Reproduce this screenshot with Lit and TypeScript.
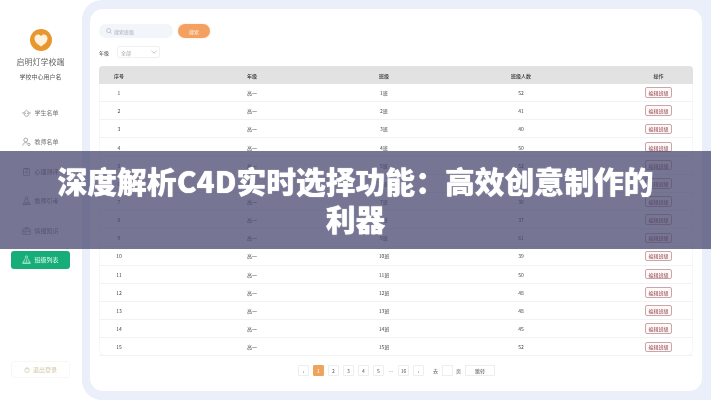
import { LitElement, html, css, svg } from "lit";
import { customElement } from "lit/decorators.js";

const counts = [52, 41, 40, 50, 52, 41, 36, 37, 61, 39, 50, 48, 48, 45, 52];
const icons = [
  svg`<path d="M2 6.5 6 3l4 3.5M3 6v2.5c0 1.5 1.4 2.5 3 2.5s3-1 3-2.5V6M1.5 5.5 1 7.5M10.5 5.5l.5 2"/><circle cx="4.8" cy="7" r=".3"/><circle cx="7.2" cy="7" r=".3"/>`,
  svg`<circle cx="5" cy="4" r="2.6"/><path d="M1 11.5c.3-2.6 2-4 4-4 1.2 0 2 .4 2.7 1"/><circle cx="9.3" cy="10" r="1.6"/>`,
  svg`<rect x="2" y="2" width="8" height="9.5" rx="1.2"/><path d="M4.5 1v2h3V1M4 6.5c1 2.500 3 2.500 4 0"/><circle cx="6" cy="5.500" r=".5"/>`,
  svg`<circle cx="6" cy="3" r="1.700"/><path d="M4.800 4.500 1.500 10.500h9L7.200 4.500M0.500 11.500h11M4 8.500h4"/>`,
  svg`<rect x="1" y="4" width="10" height="7.500" rx=".8"/><path d="M4.500 4V2h3v2M1 7h10M3 9h3"/>`,
  svg`<circle cx="6" cy="2.600" r="1.500"/><path d="M4.500 4.600 1 10.500h10L7.500 4.600M.5 11.500h11M6 6v3M4 8.500v1M8 8.500v1"/>`,
];
const menu = ["学生名单", "教师名单", "心理测评", "教师引考", "情报知识", "班级列表"];

@customElement("app-root")
export class AppRoot extends LitElement {
  static styles = css`
    :host {
      display: block;
      position: relative;
      width: 711px;
      height: 400px;
      overflow: hidden;
      background: #fff;
      font-family: "Noto Sans CJK SC", "Liberation Sans", sans-serif;
      color: #555;
    }
    .app { display: flex; width: 711px; height: 400px; filter: blur(0.45px); }
    .side {
      width: 82px; flex: none; display: flex; flex-direction: column; align-items: center;
      padding: 29px 1px 0 0; box-sizing: border-box;
    }
    .logo { width: 22px; height: 22px; display: block; }
    .brand { font-size: 8px; line-height: 12px; margin-top: 5px; color: #666; white-space: nowrap; }
    .user { font-size: 6px; line-height: 9px; margin-top: 4px; color: #555; white-space: nowrap; }
    .menu { display: flex; flex-direction: column; gap: 11.500px; margin-top: 22px; width: 59px; }
    .item {
      height: 18px; display: flex; align-items: center; justify-content: center; gap: 3px;
      font-size: 6px; color: #777; border-radius: 3px; white-space: nowrap;
    }
    .item svg { width: 9px; height: 9px; fill: none; stroke: currentColor; stroke-width: .8; }
    .item.on { background: #17ad79; color: #e8fff6; }
    .quit {
      margin-top: auto; margin-bottom: 22px; width: 59px; height: 17px; box-sizing: border-box;
      border: 1px solid #f9f7f1; border-radius: 3px; display: flex; align-items: center; justify-content: center;
      gap: 3px; font-size: 6px; color: #d2c8ac; white-space: nowrap;
    }
    .quit svg { width: 6px; height: 6px; fill: none; stroke: currentColor; stroke-width: 1; }
    .panel {
      width: 629px; flex: none; background: #eaeffa; border-radius: 20px 0 0 20px;
      padding: 9px 9px 9px 8px; display: flex; box-sizing: border-box;
    }
    .card {
      width: 612px; flex: none; background: #fff; border-radius: 13px; box-sizing: border-box;
      padding: 15px 9px 0; display: flex; flex-direction: column;
    }
    .search { display: flex; gap: 5px; height: 14px; }
    .input {
      width: 74px; background: #f2f5f9; border-radius: 7px; display: flex; align-items: center;
      padding-left: 7px; gap: 2px; box-sizing: border-box; font-size: 5px; color: #a9afb8; white-space: nowrap;
    }
    .input svg { width: 6px; height: 6px; fill: none; stroke: #a5abb5; stroke-width: .8; }
    .go {
      width: 32px; background: #f4a061; border-radius: 7px; color: #fff3e6; font-size: 5px;
      display: flex; align-items: center; justify-content: center; box-shadow: 0 0 2px #fbd9bd;
    }
    .filter { display: flex; align-items: center; gap: 8px; margin-top: 8px; height: 12px; font-size: 5px; color: #444; }
    .select {
      width: 43px; height: 12px; box-sizing: border-box; border: 1px solid #f0f0f0; border-radius: 2px;
      display: flex; align-items: center; justify-content: space-between; padding: 0 2px 0 3px; color: #a5a5a5;
    }
    .select svg { width: 6px; height: 4px; fill: none; stroke: #aaa; stroke-width: .7; }
    .table {
      margin-top: 8px; width: 594px; display: flex; flex-direction: column;
      border-radius: 4px 4px 6px 6px; box-shadow: inset 0 0 0 1px #f6f7f9;
    }
    .row {
      display: grid; grid-template-columns: 133px 132px 137px 134px 58px; height: 18.170px;
      align-items: center; box-sizing: border-box; border-bottom: 1px solid #f1f2f4;
      font-size: 5px; color: #3f3f3f;
    }
    .row.head {
      background: #e2e2e2; border: 0; height: 18px; border-radius: 4px 4px 0 0; color: #333; font-weight: 500;
    }
    .cell { padding-left: 10px; }
    .cell span { display: block; width: 20px; text-align: center; white-space: nowrap; }
    .edit {
      width: 27px; height: 10.500px; box-sizing: border-box; border: 1px solid #c9a6ab; border-radius: 2px;
      background: #fff9f8; color: #8e3e48; font-size: 5px; display: flex; align-items: center; justify-content: center;
      white-space: nowrap;
    }
    .head .op { width: 27px; }
    .pages { display: flex; align-items: center; height: 11px; margin-top: 8.500px; padding-left: 199px; font-size: 5px; color: #555; }
    .pg {
      width: 11px; height: 11px; box-sizing: border-box; border: 1px solid #eceef0; margin-right: 4px;
      display: flex; align-items: center; justify-content: center; border-radius: 1px;
    }
    .pg.on { background: #eea45f; border-color: #eea45f; color: #fff; }
    .dots { width: 6px; margin-right: 4px; text-align: center; color: #999; }
    .lbl { margin: 0 4px 0 5px; }
    .box { width: 11px; height: 11px; border: 1px solid #eceef0; box-sizing: border-box; }
    .lbl2 { margin: 0 4px 0 3px; }
    .jump {
      width: 30px; height: 11px; border: 1px solid #eceef0; box-sizing: border-box; display: flex;
      align-items: center; justify-content: center;
    }
    .banner {
      position: absolute; left: 0; right: 0; top: 151px; height: 98px; background: rgba(72, 72, 112, .75);
      display: flex; align-items: center; justify-content: center; text-align: center; box-sizing: border-box;
      padding: 0 50px 2px; color: #fff; font-size: 29.800px; line-height: 38px; font-weight: 900;
      filter: blur(0.3px); text-shadow: 0 0 1px #fff;
    }
  `;

  render() {
    return html`
      <div class="app">
        <aside class="side">
          <svg class="logo" viewBox="0 0 22 22">
            <circle cx="11" cy="11" r="11" fill="#e8972f" />
            <path d="M11 17.500C6 14.500 4.500 11.800 4.500 9.300 4.500 7 6.300 5.500 8 5.500c1.300 0 2.300.6 3 1.500.7-.9 1.700-1.500 3-1.500 1.700 0 3.500 1.500 3.500 3.800 0 2.500-1.500 5.200-6.500 8.200Z" fill="#fff2dd" />
          </svg>
          <div class="brand">启明灯学校端</div>
          <div class="user">学校中心用户名</div>
          <nav class="menu">
            ${menu.map(
              (m, i) => html`<div class="item ${i === 5 ? "on" : ""}">
                <svg viewBox="0 0 12 12">${icons[i]}</svg>${m}
              </div>`
            )}
          </nav>
          <div class="quit">
            <svg viewBox="0 0 8 8"><circle cx="4" cy="4.300" r="3" /><path d="M4 .5v3" /></svg>退出登录
          </div>
        </aside>
        <main class="panel">
          <section class="card">
            <div class="search">
              <div class="input">
                <svg viewBox="0 0 8 8"><circle cx="3.500" cy="3.500" r="2.700" /><path d="m5.500 5.500 2 2" /></svg>搜索班级
              </div>
              <div class="go">搜索</div>
            </div>
            <div class="filter">
              <span>年级</span>
              <div class="select">
                <span>全部</span>
                <svg viewBox="0 0 6 4"><path d="m.5.8 2.500 2.400L5.500.8" /></svg>
              </div>
            </div>
            <div class="table">
              <div class="row head">
                <div class="cell"><span>序号</span></div>
                <div class="cell"><span>年级</span></div>
                <div class="cell"><span>班级</span></div>
                <div class="cell"><span>班级人数</span></div>
                <div class="cell"><span class="op">操作</span></div>
              </div>
              ${counts.map(
                (c, i) => html`<div class="row">
                  <div class="cell"><span>${i + 1}</span></div>
                  <div class="cell"><span>高一</span></div>
                  <div class="cell"><span>${i + 1}班</span></div>
                  <div class="cell"><span>${c}</span></div>
                  <div class="cell"><div class="edit">编辑班级</div></div>
                </div>`
              )}
            </div>
            <div class="pages">
              <div class="pg">‹</div>
              <div class="pg on">1</div>
              <div class="pg">2</div>
              <div class="pg">3</div>
              <div class="pg">4</div>
              <div class="pg">5</div>
              <div class="dots">…</div>
              <div class="pg">16</div>
              <div class="pg">›</div>
              <span class="lbl">去</span>
              <div class="box"></div>
              <span class="lbl2">页</span>
              <div class="jump">跳转</div>
            </div>
          </section>
        </main>
      </div>
      <div class="banner">深度解析C4D实时选择功能：高效创意制作的利器</div>
    `;
  }
}
